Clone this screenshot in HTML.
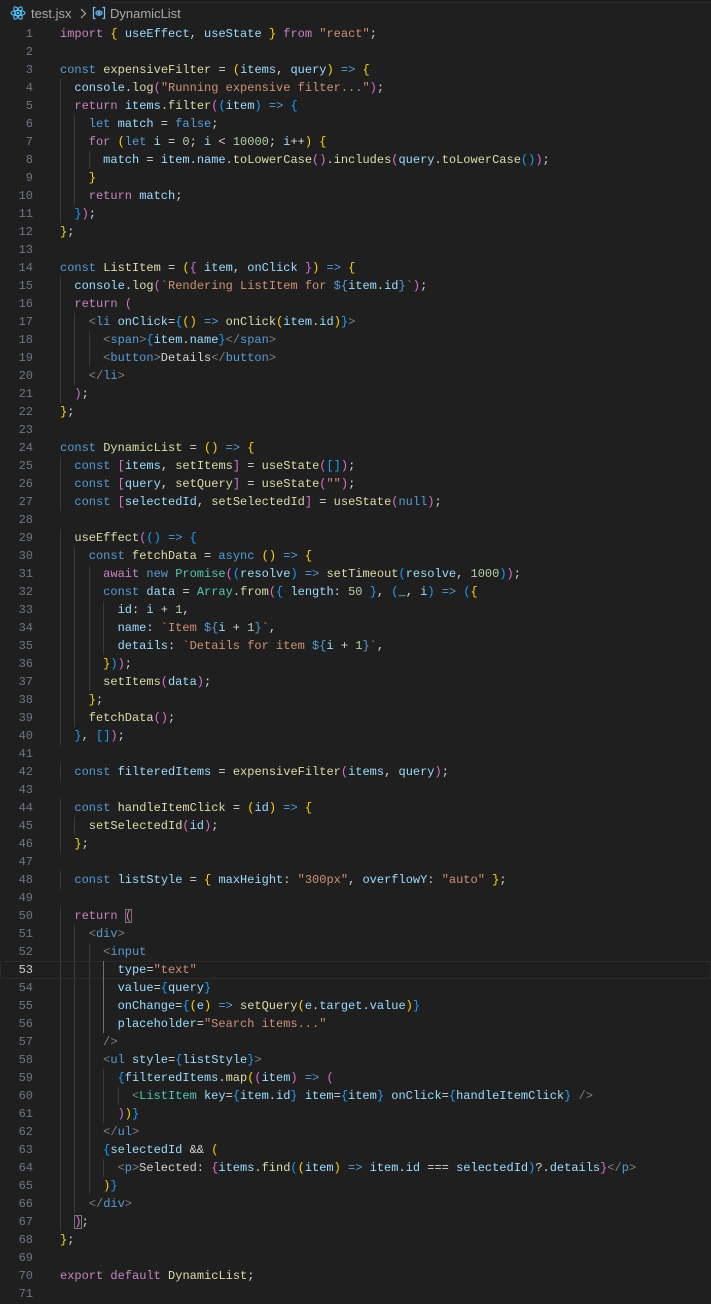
<!DOCTYPE html>
<html><head><meta charset="utf-8">
<style>
html,body{margin:0;padding:0;background:#1f1f1f;width:711px;height:1304px;overflow:hidden}
#hdr{position:absolute;left:0;top:0;width:711px;height:25px;font-family:"Liberation Sans",sans-serif;font-size:13px;color:#a9a9a9}
#hdr .t{position:absolute;top:6px}
#topbar{position:absolute;left:112px;top:0;width:599px;height:2px;border-bottom:1px solid #2b2b2b}
#code{position:absolute;left:0;top:25px;width:711px;font-family:"Liberation Mono",monospace;font-size:12px;line-height:18px;color:#d4d4d4}
.l{height:18px;position:relative;white-space:pre}
.n{position:absolute;left:0;width:33px;text-align:right;color:#6e7681}
.c{position:absolute;left:60px}
.act{background:#1f1f1f;box-shadow:inset 0 0 0 1px #2a2a2a}
.act .n{color:#cccccc}
.i{display:inline-block;width:14.4px;box-shadow:inset 1px 0 0 #3a3a3a;height:18px;vertical-align:top}
.ia{box-shadow:inset 1px 0 0 #707070}
.k{color:#c586c0}.b{color:#569cd6}.v{color:#9cdcfe}.f{color:#dcdcaa}.s{color:#ce9178}.m{color:#b5cea8}
.y{color:#ffd700}.p{color:#da70d6}.q{color:#179fff}.g{color:#808080}.t2{color:#4ec9b0}
.box{outline:1px solid #777;outline-offset:-1px}
</style></head><body>
<div id="topbar"></div>
<div id="hdr">
<svg style="position:absolute;left:10px;top:6px" width="16" height="14" viewBox="0 0 16 14"><g fill="none" stroke="#4fc3f7" stroke-width="1.1"><ellipse cx="8" cy="7" rx="7" ry="2.6"/><ellipse cx="8" cy="7" rx="7" ry="2.6" transform="rotate(60 8 7)"/><ellipse cx="8" cy="7" rx="7" ry="2.6" transform="rotate(-60 8 7)"/></g><circle cx="8" cy="7" r="1.3" fill="#4fc3f7"/></svg>
<span class="t" style="left:31px">test.jsx</span>
<svg style="position:absolute;left:79px;top:8px" width="8" height="11" viewBox="0 0 8 11"><path d="M2 1l4.5 4.5L2 10" fill="none" stroke="#a9a9a9" stroke-width="1.2"/></svg>
<svg style="position:absolute;left:92px;top:6px" width="14" height="14" viewBox="0 0 14 14"><g fill="none" stroke="#75beff" stroke-width="1.2"><path d="M3.5 1.5H1.5v11h2M10.5 1.5h2v11h-2"/><ellipse cx="7" cy="7" rx="3" ry="2.2"/><circle cx="7" cy="7" r="0.8"/></g></svg>
<span class="t" style="left:110px">DynamicList</span>
</div>
<div id="code">
<div class="l"><span class="n">1</span><span class="c"><span class="k">import</span> <span class="y">{</span> <span class="v">useEffect</span>, <span class="v">useState</span> <span class="y">}</span> <span class="k">from</span> <span class="s">"react"</span>;</span></div>
<div class="l"><span class="n">2</span></div>
<div class="l"><span class="n">3</span><span class="c"><span class="b">const</span> <span class="f">expensiveFilter</span> = <span class="y">(</span><span class="v">items</span>, <span class="v">query</span><span class="y">)</span> <span class="b">=&gt;</span> <span class="y">{</span></span></div>
<div class="l"><span class="n">4</span><span class="c"><span class="i"></span><span class="v">console</span>.<span class="f">log</span><span class="p">(</span><span class="s">"Running expensive filter..."</span><span class="p">)</span>;</span></div>
<div class="l"><span class="n">5</span><span class="c"><span class="i"></span><span class="k">return</span> <span class="v">items</span>.<span class="f">filter</span><span class="p">(</span><span class="q">(</span><span class="v">item</span><span class="q">)</span> <span class="b">=&gt;</span> <span class="q">{</span></span></div>
<div class="l"><span class="n">6</span><span class="c"><span class="i"></span><span class="i"></span><span class="b">let</span> <span class="v">match</span> = <span class="b">false</span>;</span></div>
<div class="l"><span class="n">7</span><span class="c"><span class="i"></span><span class="i"></span><span class="k">for</span> <span class="y">(</span><span class="b">let</span> <span class="v">i</span> = <span class="m">0</span>; <span class="v">i</span> &lt; <span class="m">10000</span>; <span class="v">i</span>++<span class="y">)</span> <span class="y">{</span></span></div>
<div class="l"><span class="n">8</span><span class="c"><span class="i"></span><span class="i"></span><span class="i"></span><span class="v">match</span> = <span class="v">item</span>.<span class="v">name</span>.<span class="f">toLowerCase</span><span class="p">()</span>.<span class="f">includes</span><span class="p">(</span><span class="v">query</span>.<span class="f">toLowerCase</span><span class="q">()</span><span class="p">)</span>;</span></div>
<div class="l"><span class="n">9</span><span class="c"><span class="i"></span><span class="i"></span><span class="y">}</span></span></div>
<div class="l"><span class="n">10</span><span class="c"><span class="i"></span><span class="i"></span><span class="k">return</span> <span class="v">match</span>;</span></div>
<div class="l"><span class="n">11</span><span class="c"><span class="i"></span><span class="q">}</span><span class="p">)</span>;</span></div>
<div class="l"><span class="n">12</span><span class="c"><span class="y">}</span>;</span></div>
<div class="l"><span class="n">13</span></div>
<div class="l"><span class="n">14</span><span class="c"><span class="b">const</span> <span class="f">ListItem</span> = <span class="y">(</span><span class="p">{</span> <span class="v">item</span>, <span class="v">onClick</span> <span class="p">}</span><span class="y">)</span> <span class="b">=&gt;</span> <span class="y">{</span></span></div>
<div class="l"><span class="n">15</span><span class="c"><span class="i"></span><span class="v">console</span>.<span class="f">log</span><span class="p">(</span><span class="s">`Rendering ListItem for </span><span class="b">${</span><span class="v">item</span>.<span class="v">id</span><span class="b">}</span><span class="s">`</span><span class="p">)</span>;</span></div>
<div class="l"><span class="n">16</span><span class="c"><span class="i"></span><span class="k">return</span> <span class="p">(</span></span></div>
<div class="l"><span class="n">17</span><span class="c"><span class="i"></span><span class="i"></span><span class="g">&lt;</span><span class="b">li</span> <span class="v">onClick</span>=<span class="q">{</span><span class="y">()</span> <span class="b">=&gt;</span> <span class="f">onClick</span><span class="y">(</span><span class="v">item</span>.<span class="v">id</span><span class="y">)</span><span class="q">}</span><span class="g">&gt;</span></span></div>
<div class="l"><span class="n">18</span><span class="c"><span class="i"></span><span class="i"></span><span class="i"></span><span class="g">&lt;</span><span class="b">span</span><span class="g">&gt;</span><span class="q">{</span><span class="v">item</span>.<span class="v">name</span><span class="q">}</span><span class="g">&lt;/</span><span class="b">span</span><span class="g">&gt;</span></span></div>
<div class="l"><span class="n">19</span><span class="c"><span class="i"></span><span class="i"></span><span class="i"></span><span class="g">&lt;</span><span class="b">button</span><span class="g">&gt;</span>Details<span class="g">&lt;/</span><span class="b">button</span><span class="g">&gt;</span></span></div>
<div class="l"><span class="n">20</span><span class="c"><span class="i"></span><span class="i"></span><span class="g">&lt;/</span><span class="b">li</span><span class="g">&gt;</span></span></div>
<div class="l"><span class="n">21</span><span class="c"><span class="i"></span><span class="p">)</span>;</span></div>
<div class="l"><span class="n">22</span><span class="c"><span class="y">}</span>;</span></div>
<div class="l"><span class="n">23</span></div>
<div class="l"><span class="n">24</span><span class="c"><span class="b">const</span> <span class="f">DynamicList</span> = <span class="y">()</span> <span class="b">=&gt;</span> <span class="y">{</span></span></div>
<div class="l"><span class="n">25</span><span class="c"><span class="i"></span><span class="b">const</span> <span class="p">[</span><span class="v">items</span>, <span class="f">setItems</span><span class="p">]</span> = <span class="f">useState</span><span class="p">(</span><span class="q">[]</span><span class="p">)</span>;</span></div>
<div class="l"><span class="n">26</span><span class="c"><span class="i"></span><span class="b">const</span> <span class="p">[</span><span class="v">query</span>, <span class="f">setQuery</span><span class="p">]</span> = <span class="f">useState</span><span class="p">(</span><span class="s">""</span><span class="p">)</span>;</span></div>
<div class="l"><span class="n">27</span><span class="c"><span class="i"></span><span class="b">const</span> <span class="p">[</span><span class="v">selectedId</span>, <span class="f">setSelectedId</span><span class="p">]</span> = <span class="f">useState</span><span class="p">(</span><span class="b">null</span><span class="p">)</span>;</span></div>
<div class="l"><span class="n">28</span></div>
<div class="l"><span class="n">29</span><span class="c"><span class="i"></span><span class="f">useEffect</span><span class="p">(</span><span class="q">()</span> <span class="b">=&gt;</span> <span class="q">{</span></span></div>
<div class="l"><span class="n">30</span><span class="c"><span class="i"></span><span class="i"></span><span class="b">const</span> <span class="f">fetchData</span> = <span class="b">async</span> <span class="y">()</span> <span class="b">=&gt;</span> <span class="y">{</span></span></div>
<div class="l"><span class="n">31</span><span class="c"><span class="i"></span><span class="i"></span><span class="i"></span><span class="k">await</span> <span class="b">new</span> <span class="t2">Promise</span><span class="p">(</span><span class="q">(</span><span class="v">resolve</span><span class="q">)</span> <span class="b">=&gt;</span> <span class="f">setTimeout</span><span class="q">(</span><span class="v">resolve</span>, <span class="m">1000</span><span class="q">)</span><span class="p">)</span>;</span></div>
<div class="l"><span class="n">32</span><span class="c"><span class="i"></span><span class="i"></span><span class="i"></span><span class="b">const</span> <span class="v">data</span> = <span class="t2">Array</span>.<span class="f">from</span><span class="p">(</span><span class="q">{</span> <span class="v">length</span>: <span class="m">50</span> <span class="q">}</span>, <span class="q">(</span><span class="v">_</span>, <span class="v">i</span><span class="q">)</span> <span class="b">=&gt;</span> <span class="q">(</span><span class="y">{</span></span></div>
<div class="l"><span class="n">33</span><span class="c"><span class="i"></span><span class="i"></span><span class="i"></span><span class="i"></span><span class="v">id</span>: <span class="v">i</span> + <span class="m">1</span>,</span></div>
<div class="l"><span class="n">34</span><span class="c"><span class="i"></span><span class="i"></span><span class="i"></span><span class="i"></span><span class="v">name</span>: <span class="s">`Item </span><span class="b">${</span><span class="v">i</span> + <span class="m">1</span><span class="b">}</span><span class="s">`</span>,</span></div>
<div class="l"><span class="n">35</span><span class="c"><span class="i"></span><span class="i"></span><span class="i"></span><span class="i"></span><span class="v">details</span>: <span class="s">`Details for item </span><span class="b">${</span><span class="v">i</span> + <span class="m">1</span><span class="b">}</span><span class="s">`</span>,</span></div>
<div class="l"><span class="n">36</span><span class="c"><span class="i"></span><span class="i"></span><span class="i"></span><span class="y">}</span><span class="q">)</span><span class="p">)</span>;</span></div>
<div class="l"><span class="n">37</span><span class="c"><span class="i"></span><span class="i"></span><span class="i"></span><span class="f">setItems</span><span class="p">(</span><span class="v">data</span><span class="p">)</span>;</span></div>
<div class="l"><span class="n">38</span><span class="c"><span class="i"></span><span class="i"></span><span class="y">}</span>;</span></div>
<div class="l"><span class="n">39</span><span class="c"><span class="i"></span><span class="i"></span><span class="f">fetchData</span><span class="p">()</span>;</span></div>
<div class="l"><span class="n">40</span><span class="c"><span class="i"></span><span class="q">}</span>, <span class="q">[]</span><span class="p">)</span>;</span></div>
<div class="l"><span class="n">41</span></div>
<div class="l"><span class="n">42</span><span class="c"><span class="i"></span><span class="b">const</span> <span class="v">filteredItems</span> = <span class="f">expensiveFilter</span><span class="p">(</span><span class="v">items</span>, <span class="v">query</span><span class="p">)</span>;</span></div>
<div class="l"><span class="n">43</span></div>
<div class="l"><span class="n">44</span><span class="c"><span class="i"></span><span class="b">const</span> <span class="f">handleItemClick</span> = <span class="y">(</span><span class="v">id</span><span class="y">)</span> <span class="b">=&gt;</span> <span class="y">{</span></span></div>
<div class="l"><span class="n">45</span><span class="c"><span class="i"></span><span class="i"></span><span class="f">setSelectedId</span><span class="p">(</span><span class="v">id</span><span class="p">)</span>;</span></div>
<div class="l"><span class="n">46</span><span class="c"><span class="i"></span><span class="y">}</span>;</span></div>
<div class="l"><span class="n">47</span></div>
<div class="l"><span class="n">48</span><span class="c"><span class="i"></span><span class="b">const</span> <span class="v">listStyle</span> = <span class="y">{</span> <span class="v">maxHeight</span>: <span class="s">"300px"</span>, <span class="v">overflowY</span>: <span class="s">"auto"</span> <span class="y">}</span>;</span></div>
<div class="l"><span class="n">49</span></div>
<div class="l"><span class="n">50</span><span class="c"><span class="i"></span><span class="k">return</span> <span class="p box">(</span></span></div>
<div class="l"><span class="n">51</span><span class="c"><span class="i"></span><span class="i"></span><span class="g">&lt;</span><span class="b">div</span><span class="g">&gt;</span></span></div>
<div class="l"><span class="n">52</span><span class="c"><span class="i"></span><span class="i"></span><span class="i"></span><span class="g">&lt;</span><span class="b">input</span></span></div>
<div class="l act"><span class="n">53</span><span class="c"><span class="i"></span><span class="i"></span><span class="i"></span><span class="i ia"></span><span class="v">type</span>=<span class="s">"text"</span></span></div>
<div class="l"><span class="n">54</span><span class="c"><span class="i"></span><span class="i"></span><span class="i"></span><span class="i ia"></span><span class="v">value</span>=<span class="q">{</span><span class="v">query</span><span class="q">}</span></span></div>
<div class="l"><span class="n">55</span><span class="c"><span class="i"></span><span class="i"></span><span class="i"></span><span class="i ia"></span><span class="v">onChange</span>=<span class="q">{</span><span class="y">(</span><span class="v">e</span><span class="y">)</span> <span class="b">=&gt;</span> <span class="f">setQuery</span><span class="y">(</span><span class="v">e</span>.<span class="v">target</span>.<span class="v">value</span><span class="y">)</span><span class="q">}</span></span></div>
<div class="l"><span class="n">56</span><span class="c"><span class="i"></span><span class="i"></span><span class="i"></span><span class="i ia"></span><span class="v">placeholder</span>=<span class="s">"Search items..."</span></span></div>
<div class="l"><span class="n">57</span><span class="c"><span class="i"></span><span class="i"></span><span class="i"></span><span class="g">/&gt;</span></span></div>
<div class="l"><span class="n">58</span><span class="c"><span class="i"></span><span class="i"></span><span class="i"></span><span class="g">&lt;</span><span class="b">ul</span> <span class="v">style</span>=<span class="q">{</span><span class="v">listStyle</span><span class="q">}</span><span class="g">&gt;</span></span></div>
<div class="l"><span class="n">59</span><span class="c"><span class="i"></span><span class="i"></span><span class="i"></span><span class="i"></span><span class="q">{</span><span class="v">filteredItems</span>.<span class="f">map</span><span class="y">(</span><span class="p">(</span><span class="v">item</span><span class="p">)</span> <span class="b">=&gt;</span> <span class="p">(</span></span></div>
<div class="l"><span class="n">60</span><span class="c"><span class="i"></span><span class="i"></span><span class="i"></span><span class="i"></span><span class="i"></span><span class="g">&lt;</span><span class="t2">ListItem</span> <span class="v">key</span>=<span class="q">{</span><span class="v">item</span>.<span class="v">id</span><span class="q">}</span> <span class="v">item</span>=<span class="q">{</span><span class="v">item</span><span class="q">}</span> <span class="v">onClick</span>=<span class="q">{</span><span class="v">handleItemClick</span><span class="q">}</span> <span class="g">/&gt;</span></span></div>
<div class="l"><span class="n">61</span><span class="c"><span class="i"></span><span class="i"></span><span class="i"></span><span class="i"></span><span class="p">)</span><span class="y">)</span><span class="q">}</span></span></div>
<div class="l"><span class="n">62</span><span class="c"><span class="i"></span><span class="i"></span><span class="i"></span><span class="g">&lt;/</span><span class="b">ul</span><span class="g">&gt;</span></span></div>
<div class="l"><span class="n">63</span><span class="c"><span class="i"></span><span class="i"></span><span class="i"></span><span class="q">{</span><span class="v">selectedId</span> &amp;&amp; <span class="y">(</span></span></div>
<div class="l"><span class="n">64</span><span class="c"><span class="i"></span><span class="i"></span><span class="i"></span><span class="i"></span><span class="g">&lt;</span><span class="b">p</span><span class="g">&gt;</span>Selected: <span class="p">{</span><span class="v">items</span>.<span class="f">find</span><span class="q">(</span><span class="y">(</span><span class="v">item</span><span class="y">)</span> <span class="b">=&gt;</span> <span class="v">item</span>.<span class="v">id</span> === <span class="v">selectedId</span><span class="q">)</span>?.<span class="v">details</span><span class="p">}</span><span class="g">&lt;/</span><span class="b">p</span><span class="g">&gt;</span></span></div>
<div class="l"><span class="n">65</span><span class="c"><span class="i"></span><span class="i"></span><span class="i"></span><span class="y">)</span><span class="q">}</span></span></div>
<div class="l"><span class="n">66</span><span class="c"><span class="i"></span><span class="i"></span><span class="g">&lt;/</span><span class="b">div</span><span class="g">&gt;</span></span></div>
<div class="l"><span class="n">67</span><span class="c"><span class="i"></span><span class="p box">)</span>;</span></div>
<div class="l"><span class="n">68</span><span class="c"><span class="y">}</span>;</span></div>
<div class="l"><span class="n">69</span></div>
<div class="l"><span class="n">70</span><span class="c"><span class="k">export</span> <span class="k">default</span> <span class="f">DynamicList</span>;</span></div>
<div class="l"><span class="n">71</span></div>
</div>
</body></html>
